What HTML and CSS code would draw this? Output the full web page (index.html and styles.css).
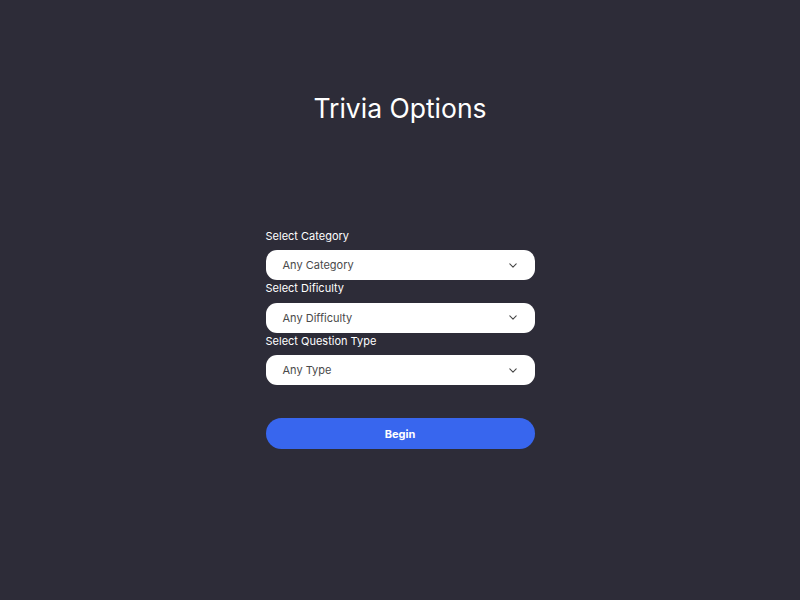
FILE: index.html
```html
<!DOCTYPE html>
<html>
<head>
<meta charset="utf-8">
<link rel="stylesheet" href="styles.css">
</head>
<body>
<main class="page">
  <h1 class="title">Trivia Options</h1>
  <form class="form">
    <label class="label">Select Category</label>
    <div class="select"><span>Any Category</span><svg class="chev" viewBox="0 0 10 6" width="8" height="5"><path d="M1 1l4 4 4-4" fill="none" stroke="#444" stroke-width="1.3" stroke-linecap="round" stroke-linejoin="round"/></svg></div>
    <label class="label">Select Dificulty</label>
    <div class="select"><span>Any Difficulty</span><svg class="chev" viewBox="0 0 10 6" width="8" height="5"><path d="M1 1l4 4 4-4" fill="none" stroke="#444" stroke-width="1.3" stroke-linecap="round" stroke-linejoin="round"/></svg></div>
    <label class="label">Select Question Type</label>
    <div class="select"><span>Any Type</span><svg class="chev" viewBox="0 0 10 6" width="8" height="5"><path d="M1 1l4 4 4-4" fill="none" stroke="#444" stroke-width="1.3" stroke-linecap="round" stroke-linejoin="round"/></svg></div>
    <button type="button" class="btn">Begin</button>
  </form>
</main>
</body>
</html>
```
FILE: styles.css
```css
html, body {
  margin: 0;
  padding: 0;
  background: #2d2c38;
  font-family: Inter, "Noto Sans", sans-serif;
}
.page {
  width: 800px;
  height: 600px;
  display: flex;
  flex-direction: column;
  align-items: center;
}
.title {
  margin: 90px 0 0;
  font-size: 26.5px;
  font-weight: 400;
  line-height: 36px;
  color: #ffffff;
}
.form {
  width: 269px;
  margin-top: 101.5px;
  display: flex;
  flex-direction: column;
}
.label {
  color: #ffffff;
  font-size: 11px;
  line-height: 16.5px;
  margin-bottom: 6px;
}
.select {
  height: 30px;
  background: #fff;
  border-radius: 11px;
  display: flex;
  align-items: center;
  justify-content: space-between;
  padding: 0 18px 0 17px;
  box-sizing: border-box;
  font-size: 11px;
  color: #4a4a4a;
}
.chev { display: block; }
.btn {
  margin-top: 33px;
  height: 31px;
  border: none;
  border-radius: 16px;
  background: #3866ee;
  color: #fff;
  font-family: Inter, "Noto Sans", sans-serif;
  font-weight: 700;
  font-size: 11px;
}
```
